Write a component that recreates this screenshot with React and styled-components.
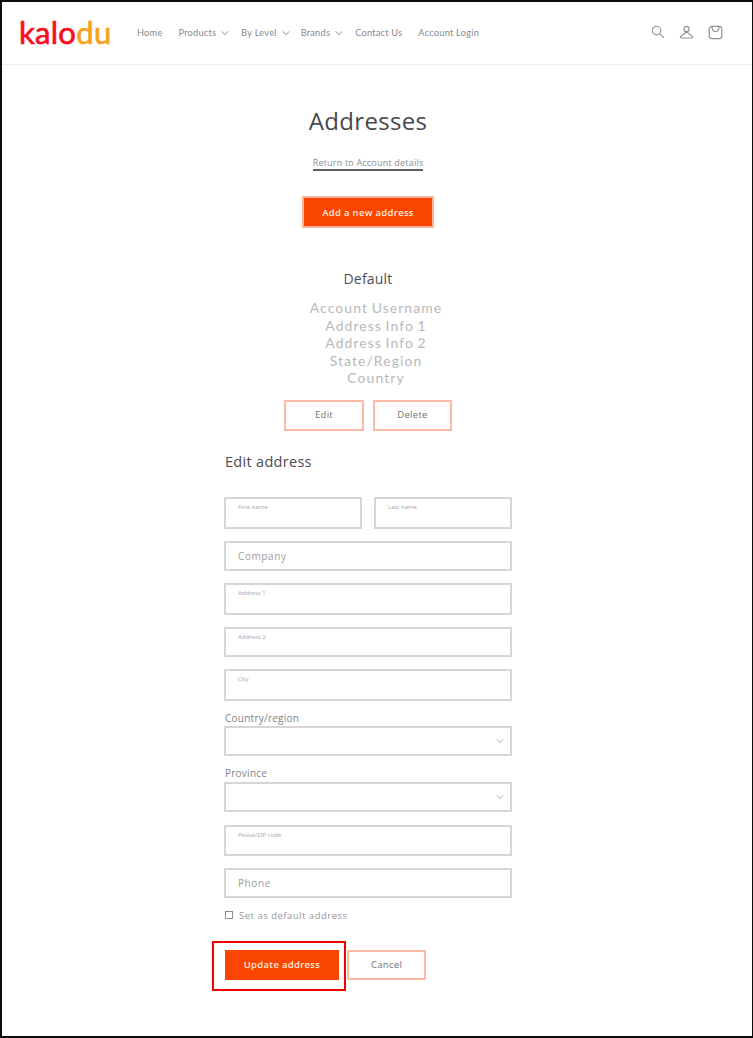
import React from "react";
import styled, { createGlobalStyle } from "styled-components";

const Global = createGlobalStyle`
  html, body {
    margin: 0;
    padding: 0;
    background: #fff;
  }
  * {
    box-sizing: border-box;
  }
`;

const Frame = styled.div`
  width: 753px;
  height: 1038px;
  overflow: hidden;
  background: #fff;
  border: solid #0c0c0c;
  border-width: 2px 1px 2px 2px;
  font-family: "Open Sans", sans-serif;
  color: #444;
`;

const Header = styled.header`
  display: flex;
  align-items: center;
  height: 63px;
  padding: 0 29px 2px 17px;
  border-bottom: 1px solid #eeeeee;
`;

const Logo = styled.div`
  width: 91px;
  margin-right: 27px;
  font-family: "Lato", sans-serif;
  font-size: 31px;
  line-height: 30px;
  letter-spacing: 0.3px;
  color: #f5101f;
  -webkit-text-stroke: 0.7px currentColor;
  span {
    color: #f9a11b;
  }
`;

const Nav = styled.nav`
  display: flex;
  align-items: center;
  flex: 1;
  font-family: "Lato", sans-serif;
  font-size: 9.2px;
  letter-spacing: 0.25px;
  color: #85878f;
`;

const NavItem = styled.a`
  display: flex;
  align-items: center;
  gap: 5px;
  margin-right: ${props => props.$gap}px;
  svg {
    margin-top: 2px;
  }
`;

const IconRow = styled.div`
  display: flex;
  align-items: center;
  gap: 14px;
  color: #929292;
`;

const Main = styled.main`
  display: flex;
  flex-direction: column;
  width: 288px;
  margin-left: 222px;
`;

const Title = styled.h1`
  margin: 39px 0 0;
  font-size: 24px;
  font-weight: 400;
  line-height: 34px;
  text-align: center;
  letter-spacing: 0.3px;
  color: #45484d;
`;

const BackLink = styled.a`
  align-self: center;
  margin-top: 19px;
  height: 14px;
  font-size: 9px;
  line-height: 12px;
  letter-spacing: 0.2px;
  color: #8b8d92;
  border-bottom: 2px solid #5d5e62;
`;

const Button = styled.button`
  height: ${props => props.$height || 31}px;
  width: ${props => props.$width}px;
  padding: 0;
  font-family: "Open Sans", sans-serif;
  font-size: 9.5px;
  font-weight: ${props => (props.$primary ? 600 : 400)};
  letter-spacing: 0.3px;
  color: ${props => (props.$primary ? "#ffe9df" : "#6f7176")};
  background: ${props => (props.$primary ? "#f94500" : "#fff")};
  border: ${props => (props.$flat ? 0 : "2px solid")};
  border-color: ${props => (props.$primary ? "#fdb49b" : "#fdbba6")};
`;

const AddButton = styled(Button)`
  align-self: center;
  margin-top: 25px;
`;

const ActionButton = styled(Button)`
  padding-bottom: 2px;
`;

const DefaultHeading = styled.h2`
  margin: 41px 0 0;
  font-size: 14px;
  font-weight: 400;
  line-height: 20px;
  text-align: center;
  letter-spacing: 0.2px;
  color: #4d4e55;
`;

const AddressLines = styled.div`
  margin-top: 10px;
  padding-left: 16px;
  font-family: "Lato", sans-serif;
  font-size: 14px;
  line-height: 17.5px;
  letter-spacing: 1.05px;
  word-spacing: -1px;
  text-align: center;
  color: #b9b9b9;
`;

const ButtonRow = styled.div`
  display: flex;
  justify-content: ${props => props.$justify || "center"};
  gap: ${props => props.$gap}px;
  margin-top: ${props => props.$top}px;
  margin-left: ${props => props.$left || 0}px;
`;

const FormHeading = styled.h2`
  margin: 21px 0 25px 1px;
  font-size: 14.5px;
  font-weight: 400;
  line-height: 20px;
  letter-spacing: 0.3px;
  color: #4a4c52;
`;

const Form = styled.form`
  display: flex;
  flex-direction: column;
`;

const NameRow = styled.div`
  display: flex;
  justify-content: space-between;
`;

const Field = styled.div`
  display: flex;
  align-items: ${props => (props.$tiny ? "flex-start" : "center")};
  justify-content: space-between;
  width: ${props => props.$width || 288}px;
  height: ${props => props.$height || 32}px;
  margin-bottom: ${props => (props.$bottom === undefined ? 12 : props.$bottom)}px;
  padding: ${props => (props.$tiny ? "4px 12px" : "0 12px")};
  border: 2px solid #d6d6d6;
  background: #fff;
  font-size: ${props => (props.$tiny ? "6px" : "10px")};
  line-height: ${props => (props.$tiny ? "8px" : "14px")};
  letter-spacing: ${props => (props.$tiny ? "0" : "0.6px")};
  color: ${props => (props.$tiny ? "#a5a5a5" : "#9c9da1")};
`;

const SelectChevron = styled.span`
  display: flex;
  margin-right: -6px;
  color: #a3a3a3;
`;

const SelectLabel = styled.label`
  margin: 0 0 ${props => props.$bottom}px 1px;
  font-size: 10px;
  line-height: 14px;
  letter-spacing: 0.25px;
  color: #7f8186;
`;

const CheckRow = styled.label`
  display: flex;
  align-items: center;
  gap: 6px;
  height: 14px;
  margin: 0 0 0 1px;
  font-size: 9.5px;
  letter-spacing: 0.5px;
  color: #97989d;
`;

const CheckBox = styled.span`
  width: 8px;
  height: 8px;
  margin-top: -2px;
  border: 1px solid #8c8d91;
`;

const Highlighted = styled.div`
  position: relative;
`;

const HighlightBox = styled.span`
  position: absolute;
  top: -9px;
  left: -13px;
  width: 134px;
  height: 50px;
  border: 2px solid #f40000;
`;

function Chevron({ size = 8 }) {
  return (
    <svg width={size} height={size} viewBox="0 0 10 10" fill="none" stroke="currentColor" strokeWidth="1.2">
      <path d="M1 3l4 4 4-4" />
    </svg>
  );
}

function SearchIcon() {
  return (
    <svg width="14" height="14" viewBox="0 0 15 15" fill="none" stroke="currentColor" strokeWidth="1.2">
      <circle cx="6" cy="6" r="4.6" />
      <path d="M9.4 9.4l4.4 4.4" />
    </svg>
  );
}

function AccountIcon() {
  return (
    <svg width="15" height="15" viewBox="0 0 15 15" fill="none" stroke="currentColor" strokeWidth="1.2">
      <circle cx="7.5" cy="4" r="2.6" />
      <path d="M7.5 6.8L1.6 11.4c-.6.5-.3 1.6.6 1.6h10.6c.9 0 1.2-1.1.6-1.6z" />
    </svg>
  );
}

function CartIcon() {
  return (
    <svg width="15" height="15" viewBox="0 0 15 15" fill="none" stroke="currentColor" strokeWidth="1.2">
      <rect x="1.2" y="1.4" width="12.6" height="12.2" rx="2.6" />
      <path d="M4 1.6c0 3.6 1.4 5 3.5 5s3.500-1.400 3.500-5" />
    </svg>
  );
}

const navItems = [
  { label: "Home", gap: 16 },
  { label: "Products", gap: 12, caret: true },
  { label: "By Level", gap: 11, caret: true },
  { label: "Brands", gap: 12, caret: true },
  { label: "Contact Us", gap: 16 },
  { label: "Account Login", gap: 0 },
];

const addressLines = ["Account Username", "Address Info 1", "Address Info 2", "State/Region", "Country"];

export default function App() {
  return (
    <Frame>
      <Global />
      <Header>
        <Logo>
          kalo<span>du</span>
        </Logo>
        <Nav>
          {navItems.map(item => (
            <NavItem key={item.label} $gap={item.gap}>
              {item.label}
              {item.caret && <Chevron />}
            </NavItem>
          ))}
        </Nav>
        <IconRow>
          <SearchIcon />
          <AccountIcon />
          <CartIcon />
        </IconRow>
      </Header>
      <Main>
        <Title>Addresses</Title>
        <BackLink>Return to Account details</BackLink>
        <AddButton $primary $width={132} $height={32}>
          Add a new address
        </AddButton>
        <DefaultHeading>Default</DefaultHeading>
        <AddressLines>
          {addressLines.map(line => (
            <div key={line}>{line}</div>
          ))}
        </AddressLines>
        <ButtonRow $gap={9} $top={13}>
          <ActionButton $width={80}>Edit</ActionButton>
          <ActionButton $width={79}>Delete</ActionButton>
        </ButtonRow>
        <FormHeading>Edit address</FormHeading>
        <Form>
          <NameRow>
            <Field $tiny $width={138}>First name</Field>
            <Field $tiny $width={138}>Last name</Field>
          </NameRow>
          <Field $height={30}>Company</Field>
          <Field $tiny>Address 1</Field>
          <Field $tiny $height={30}>Address 2</Field>
          <Field $tiny $bottom={10}>City</Field>
          <SelectLabel $bottom={1}>Country/region</SelectLabel>
          <Field $height={30} $bottom={10}>
            <span />
            <SelectChevron><Chevron /></SelectChevron>
          </Field>
          <SelectLabel $bottom={2}>Province</SelectLabel>
          <Field $height={30} $bottom={13}>
            <span />
            <SelectChevron><Chevron /></SelectChevron>
          </Field>
          <Field $tiny $height={31}>Postal/ZIP code</Field>
          <Field $height={30} $bottom={11}>Phone</Field>
          <CheckRow>
            <CheckBox />
            Set as default address
          </CheckRow>
        </Form>
        <ButtonRow $gap={8} $top={27} $justify="flex-start" $left={1}>
          <Highlighted>
            <HighlightBox />
            <Button $primary $flat $width={114} $height={30}>Update address</Button>
          </Highlighted>
          <Button $width={79} $height={30}>Cancel</Button>
        </ButtonRow>
      </Main>
    </Frame>
  );
}
